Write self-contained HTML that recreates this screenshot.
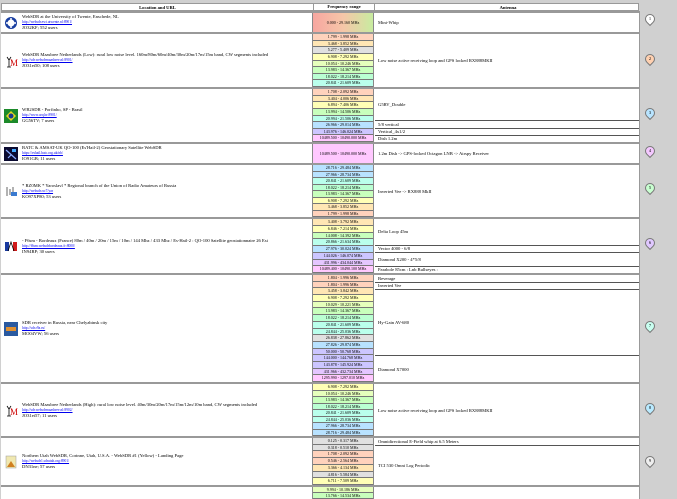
<!DOCTYPE html>
<html><head><meta charset="utf-8"><style>
*{margin:0;padding:0;box-sizing:border-box}
html,body{width:677px;height:499px;overflow:hidden}
body{background:#d0d0d0;font-family:"Liberation Serif",serif;font-size:4.6px;color:#000;position:relative}
.hdr{position:absolute;top:3px;left:1px;width:638px;height:8px;background:#fff;border:1px solid #999;font-weight:bold;font-size:4.6px}
.hdr div{position:absolute;top:1px;text-align:center}
.blk{position:absolute;left:1px;width:639px;background:#fff;border-top:2px solid #999;border-right:1px solid #999;overflow:hidden}
.loc{position:absolute;left:0;width:311px;top:0;bottom:0;display:flex;align-items:center}
.ic{width:14px;height:14px;margin:0 4px 0 3px;flex:none;position:relative}
.tx{line-height:6px;white-space:nowrap}
.tx a{color:#00e;text-decoration:underline;font-size:3.6px;display:block;line-height:5px}
.fq{position:absolute;left:311px;width:62px;top:0;bottom:0;display:flex;flex-direction:column;border-left:1px solid #888;border-right:1px solid #888}
.fq div{flex:1;text-align:center;border-bottom:1px solid #777;font-size:4px;line-height:5.5px;white-space:nowrap;overflow:hidden}
.an{position:absolute;left:374px;right:0;top:0;bottom:0;display:flex;flex-direction:column}
.an div{display:flex;align-items:center;padding-left:3px;border-bottom:1px solid #555;white-space:nowrap}
.an div:last-child{border-bottom:none}
.a{background:#ffd2bc}.b{background:#ffe6b4}.g{background:#e0e0e0}.c{background:#ffffb6}.d{background:#e6ffbc}.e{background:#c8ffbc}.f{background:#baffd2}.h{background:#baffec}.i{background:#b8e2ff}.j{background:#ccc6ff}.k{background:#e4c6ff}.l{background:#ffc8ff}
.pin{position:absolute;left:645px;width:10px;height:10px;border-radius:50% 50% 50% 0;transform:rotate(-45deg);border:1px solid #777;}
.pn{position:absolute;left:645px;width:10px;text-align:center;font-size:4.5px;line-height:10px}
</style></head><body>
<div class="hdr"><div style="left:0;width:311px">Location and URL</div><div style="left:311px;width:62px;border-left:1px solid #999;border-right:1px solid #999;top:0;height:6px;line-height:6px">Frequency range</div><div style="left:374px;width:264px">Antenna</div></div>

<div class="blk" style="top:11px;height:21px">
<div class="loc"><div class="ic"><svg width="14" height="14"><rect width="14" height="14" fill="#fff"/><circle cx="7" cy="7" r="6" fill="#1a3fa0"/><circle cx="7" cy="7" r="3.5" fill="#fff"/><path d="M2 7h3M9 7h3M7 2v3M7 9v3" stroke="#fff" stroke-width="1.5"/></svg></div><div class="tx">WebSDR at the University of Twente, Enschede, NL<a>http://websdr.ewi.utwente.nl:8901/</a>JO32KF; 552 users</div></div>
<div class="fq"><div style="background:linear-gradient(90deg,#f7a6a0,#f6c6a8,#c8eca0);line-height:19px;border:none">0.000 - 29.160 MHz</div></div>
<div class="an"><div style="flex:1">Mini-Whip</div></div></div>

<div class="blk" style="top:32px;height:55px">
<div class="loc"><div class="ic"><svg width="14" height="14"><path d="M3 3l2 3 2-3M5 6v7M3 13h4" stroke="#000" fill="none" stroke-width="0.8"/><text x="6" y="12" font-size="9" fill="#c00" font-family="Liberation Serif">M</text></svg></div><div class="tx">WebSDR Maasbree Netherlands (Low): rural low noise level. 160m/80m/60m/40m/30m/20m/17m/15m band, CW segments included<a>http://sdr.websdrmaasbree.nl:8901/</a>JO31ei50; 108 users</div></div>
<div class="fq"><div class="a">1.799 - 1.998 MHz</div><div class="b">3.468 - 3.852 MHz</div><div class="g">5.277 - 5.409 MHz</div><div class="c">6.908 - 7.292 MHz</div><div class="d">10.054 - 10.246 MHz</div><div class="e">13.983 - 14.367 MHz</div><div class="f">18.022 - 18.214 MHz</div><div class="h">20.841 - 21.609 MHz</div></div>
<div class="an"><div style="flex:1">Low noise active receiving loop and GPS locked RX888MKII</div></div></div>

<div class="blk" style="top:87px;height:55px">
<div class="loc"><div class="ic"><svg width="14" height="14"><rect width="14" height="14" fill="#1c8a2a"/><path d="M7 2l5 5-5 5-5-5z" fill="#e8d820"/><circle cx="7" cy="7" r="2.5" fill="#1a3a90"/></svg></div><div class="tx">WB2SDR - Porfinho, SP - Brasil<a>http://www.arq.br:8901/</a>GG56TV; 7 users</div></div>
<div class="fq"><div class="a">1.708 - 2.092 MHz</div><div class="b">3.404 - 4.006 MHz</div><div class="c">6.894 - 7.406 MHz</div><div class="e">13.994 - 14.506 MHz</div><div class="h">20.994 - 21.506 MHz</div><div class="i">26.966 - 29.014 MHz</div><div class="j">143.976 - 146.024 MHz</div><div class="l">10489.500 - 10490.000 MHz</div></div>
<div class="an"><div style="flex:5">G5RV_Double</div><div style="flex:1">5/8 vertical</div><div style="flex:1">Vertical_4x1/2</div><div style="flex:1">Dish 1.2m</div></div></div>

<div class="blk" style="top:142px;height:21px">
<div class="loc"><div class="ic"><svg width="14" height="14"><rect width="14" height="14" fill="#0a0a30"/><path d="M2 3l10 9M4 11l3-3" stroke="#8af" stroke-width="1.2"/><rect x="8" y="2" width="4" height="3" fill="#4af"/></svg></div><div class="tx">BATC &amp; AMSAT-UK QO-100 (Es'Hail-2) Geostationary Satellite WebSDR<a>https://eshail.batc.org.uk/nb/</a>IO91GB; 11 users</div></div>
<div class="fq"><div class="l" style="line-height:19px;border:none">10489.500 - 10490.000 MHz</div></div>
<div class="an"><div style="flex:1">1.2m Dish -&gt; GPS-locked Octagon LNB -&gt; Airspy Receiver</div></div></div>

<div class="blk" style="top:163px;height:54px">
<div class="loc"><div class="ic"><svg width="14" height="14"><path d="M3 3v9M6 5v6M9 3v8" stroke="#666" stroke-width="1"/><rect x="7" y="8" width="6" height="4" fill="#3a7ad0"/></svg></div><div class="tx">* RZ0MK * Yaroslavl * Regional branch of the Union of Radio Amateurs of Russia<a>http://websdr.ru:7/yar</a>KO97XP80; 53 users</div></div>
<div class="fq"><div class="i">28.716 - 29.484 MHz</div><div class="i">27.966 - 28.734 MHz</div><div class="h">20.841 - 21.609 MHz</div><div class="f">18.022 - 18.214 MHz</div><div class="e">13.983 - 14.367 MHz</div><div class="c">6.908 - 7.292 MHz</div><div class="b">3.468 - 3.852 MHz</div><div class="a">1.799 - 1.998 MHz</div></div>
<div class="an"><div style="flex:1">Inverted Vee -&gt; RX888 MkII</div></div></div>

<div class="blk" style="top:217px;height:56px">
<div class="loc"><div class="ic"><svg width="14" height="14"><rect x="1" y="3" width="4" height="9" fill="#1a3aa0"/><rect x="5" y="3" width="4" height="9" fill="#fff"/><rect x="9" y="3" width="4" height="9" fill="#d01a1a"/><path d="M4 12l3-9 3 9" stroke="#000" fill="none" stroke-width="0.8"/></svg></div><div class="tx">- F6sm - Bordeaux (France) 80m / 40m / 20m / 15m / 10m / 144 Mhz / 433 Mhz / Es-Hail-2 : QO-100 Satellite geostationnaire 26 Est<a>http://f6sm.websdrbordeaux.fr:8000/</a>IN94RP; 30 users</div></div>
<div class="fq"><div class="b">3.408 - 3.792 MHz</div><div class="c">6.846 - 7.214 MHz</div><div class="e">14.008 - 14.392 MHz</div><div class="h">20.866 - 21.634 MHz</div><div class="i">27.976 - 30.024 MHz</div><div class="j">144.026 - 146.074 MHz</div><div class="k">431.996 - 434.044 MHz</div><div class="l">10489.400 - 10490.100 MHz</div></div>
<div class="an"><div style="flex:4">Delta Loop 45m</div><div style="flex:1">Vector 4000 - 6/8</div><div style="flex:2">Diamond X200 - 4*5/8</div><div style="flex:1">Parabole 85cm : Lnb Bullseyes :</div></div></div>

<div class="blk" style="top:273px;height:109px">
<div class="loc"><div class="ic"><svg width="14" height="14"><rect width="14" height="14" fill="#2a5aa0"/><rect x="2" y="5" width="10" height="4" fill="#e09030"/></svg></div><div class="tx">SDR receiver in Russia, near Chelyabinsk city<a>http://sdr.r9a.ru/</a>MO04VW; 56 users</div></div>
<div class="fq"><div class="a">1.804 - 1.996 MHz</div><div class="a">1.804 - 1.996 MHz</div><div class="b">3.458 - 3.842 MHz</div><div class="c">6.908 - 7.292 MHz</div><div class="d">10.029 - 10.221 MHz</div><div class="e">13.983 - 14.367 MHz</div><div class="f">18.022 - 18.214 MHz</div><div class="h">20.841 - 21.609 MHz</div><div class="h">24.844 - 25.036 MHz</div><div class="g">26.838 - 27.862 MHz</div><div class="i">27.826 - 29.874 MHz</div><div class="j">50.000 - 50.768 MHz</div><div class="j">144.000 - 144.768 MHz</div><div class="j">143.878 - 145.924 MHz</div><div class="k">431.966 - 432.734 MHz</div><div class="l">1295.990 - 1297.010 MHz</div></div>
<div class="an"><div style="flex:1">Beverage</div><div style="flex:1">Inverted Vee</div><div style="flex:10">Hy-Gain AV-680</div><div style="flex:4">Diamond X7000</div></div></div>

<div class="blk" style="top:382px;height:54px">
<div class="loc"><div class="ic"><svg width="14" height="14"><path d="M3 3l2 3 2-3M5 6v7M3 13h4" stroke="#000" fill="none" stroke-width="0.8"/><text x="6" y="12" font-size="9" fill="#c00" font-family="Liberation Serif">M</text></svg></div><div class="tx">WebSDR Maasbree Netherlands (High): rural low noise level. 40m/30m/20m/17m/15m/12m/10m band, CW segments included<a>http://sdr.websdrmaasbree.nl:8902/</a>JO31ei57; 11 users</div></div>
<div class="fq"><div class="c">6.908 - 7.292 MHz</div><div class="d">10.054 - 10.246 MHz</div><div class="e">13.983 - 14.367 MHz</div><div class="f">18.022 - 18.214 MHz</div><div class="h">20.841 - 21.609 MHz</div><div class="h">24.844 - 25.036 MHz</div><div class="i">27.966 - 28.734 MHz</div><div class="i">28.716 - 29.484 MHz</div></div>
<div class="an"><div style="flex:1">Low noise active receiving loop and GPS locked RX888MKII</div></div></div>

<div class="blk" style="top:436px;height:49px">
<div class="loc"><div class="ic"><svg width="14" height="14"><rect x="2" y="1" width="10" height="12" fill="#f0e8b0" stroke="#999" stroke-width="0.5"/><path d="M3 12l4-6 4 6z" fill="#d08020"/></svg></div><div class="tx">Northern Utah WebSDR, Corinne, Utah, U.S.A. - WebSDR #1 (Yellow) - Landing Page<a>http://websdr1.sdrutah.org:8901/</a>DN31ne; 57 users</div></div>
<div class="fq"><div class="g">0.125 - 0.317 MHz</div><div class="g">0.318 - 0.510 MHz</div><div class="a">1.708 - 2.092 MHz</div><div class="a">0.546 - 2.564 MHz</div><div class="b">3.366 - 4.134 MHz</div><div class="g">4.816 - 5.584 MHz</div><div class="c">6.711 - 7.509 MHz</div></div>
<div class="an"><div style="flex:1">Omnidirectional E-Field whip at 6.5 Meters</div><div style="flex:6">TCI 530 Omni Log Periodic</div></div></div>

<div class="blk" style="top:485px;height:14px">
<div class="fq"><div class="d">9.994 - 10.186 MHz</div><div class="e">13.766 - 14.534 MHz</div></div></div>

<div class="pin" style="top:14px;background:#fff"></div><div class="pn" style="top:14px">1</div>
<div class="pin" style="top:54px;background:#ffd0b0"></div><div class="pn" style="top:54px">2</div>
<div class="pin" style="top:108px;background:#b8e4ff"></div><div class="pn" style="top:108px">3</div>
<div class="pin" style="top:146px;background:#f4c8ff"></div><div class="pn" style="top:146px">4</div>
<div class="pin" style="top:183px;background:#c8ffd0"></div><div class="pn" style="top:183px">5</div>
<div class="pin" style="top:238px;background:#e0c8ff"></div><div class="pn" style="top:238px">6</div>
<div class="pin" style="top:321px;background:#c8fff0"></div><div class="pn" style="top:321px">7</div>
<div class="pin" style="top:403px;background:#b8eaff"></div><div class="pn" style="top:403px">8</div>
<div class="pin" style="top:456px;background:#eee"></div><div class="pn" style="top:456px">9</div>
</body></html>
